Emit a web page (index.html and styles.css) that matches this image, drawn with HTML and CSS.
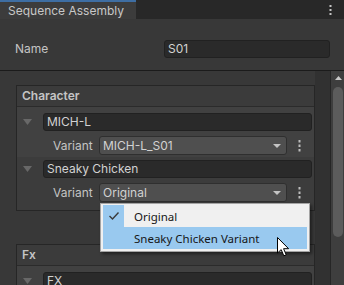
FILE: index.html
```html
<!DOCTYPE html>
<html>
<head>
<meta charset="utf-8">
<link rel="stylesheet" href="styles.css">
</head>
<body>
<div class="window">
  <div class="tabbar">
    <div class="tab">Sequence Assembly</div>
    <div class="tabbar-spacer"></div>
    <svg class="kebab tab-kebab" width="3" height="10" viewBox="0 0 3 10"><rect x="0.5" y="0" width="2" height="2" fill="#c4c4c4"/><rect x="0.5" y="4" width="2" height="2" fill="#c4c4c4"/><rect x="0.5" y="8" width="2" height="2" fill="#c4c4c4"/></svg>
  </div>
  <div class="namebar">
    <span class="label">Name</span>
    <div class="field name-field">S01</div>
  </div>
  <div class="scrollview">
    <div class="content">
      <div class="inner">
        <section class="box">
          <div class="box-header">Character</div>
          <div class="box-body">
            <div class="item">
              <div class="line">
                <svg class="fold" width="9" height="6" viewBox="0 0 9 6"><polygon points="0,0 9,0 4.5,6" fill="#686868"/></svg>
                <div class="field item-field">MICH-L</div>
              </div>
              <div class="line variant-line">
                <span class="variant-label">Variant</span>
                <div class="dropdown"><span>MICH-L_S01</span><svg width="8" height="4" viewBox="0 0 8 4"><polygon points="0,0 8,0 4,4" fill="#c4c4c4"/></svg></div>
                <div class="kebab-wrap"><svg width="3" height="12" viewBox="0 0 3 12"><rect x="0.5" y="0" width="2" height="2.5" fill="#bdbdbd"/><rect x="0.5" y="4.5" width="2" height="2.5" fill="#bdbdbd"/><rect x="0.5" y="9" width="2" height="2.5" fill="#bdbdbd"/></svg></div>
              </div>
            </div>
            <div class="item item-alt">
              <div class="line">
                <svg class="fold" width="9" height="6" viewBox="0 0 9 6"><polygon points="0,0 9,0 4.5,6" fill="#686868"/></svg>
                <div class="field item-field">Sneaky Chicken</div>
              </div>
              <div class="line variant-line">
                <span class="variant-label">Variant</span>
                <div class="dropdown"><span>Original</span><svg width="8" height="4" viewBox="0 0 8 4"><polygon points="0,0 8,0 4,4" fill="#c4c4c4"/></svg></div>
                <div class="kebab-wrap"><svg width="3" height="12" viewBox="0 0 3 12"><rect x="0.5" y="0" width="2" height="2.5" fill="#bdbdbd"/><rect x="0.5" y="4.5" width="2" height="2.5" fill="#bdbdbd"/><rect x="0.5" y="9" width="2" height="2.5" fill="#bdbdbd"/></svg></div>
              </div>
            </div>
          </div>
        </section>
        <section class="box fx-box">
          <div class="box-header">Fx</div>
          <div class="box-body">
            <div class="item">
              <div class="line">
                <svg class="fold" width="9" height="6" viewBox="0 0 9 6"><polygon points="0,0 9,0 4.5,6" fill="#686868"/></svg>
                <div class="field item-field">FX</div>
              </div>
            </div>
          </div>
        </section>
      </div>
      <div class="gutter"></div>
    </div>
    <div class="scrollbar">
      <svg class="sb-arrow" width="7" height="4" viewBox="0 0 7 4"><polygon points="3.5,0 7,4 0,4" fill="#c8c8c8"/></svg>
      <div class="thumb"></div>
    </div>
  </div>

  <div class="popup">
    <div class="menu-item checked">
      <div class="check-col"><svg width="12" height="10" viewBox="0 0 12 10"><polyline points="1.5,5 4.5,8 10.5,1.5" fill="none" stroke="#3a3a3a" stroke-width="1.4"/></svg></div>
      <span class="menu-text">Original</span>
    </div>
    <div class="menu-item hover">
      <div class="check-col"></div>
      <span class="menu-text">Sneaky Chicken Variant</span>
    </div>
  </div>
  <svg class="cursor" width="14" height="21" viewBox="0 0 14 21"><path d="M0.5,0.5 L0.5,16 L4.2,12.6 L6.8,18.8 L9.2,17.8 L6.6,11.7 L11.6,11.7 Z" fill="#ffffff" stroke="#000000" stroke-width="1" stroke-linejoin="miter"/></svg>
</div>
</body>
</html>
```

FILE: styles.css
```css
* { box-sizing: border-box; }
html, body { margin: 0; padding: 0; }
body {
  width: 344px;
  height: 285px;
  overflow: hidden;
  background: #383838;
  font-family: Inter, "Noto Sans", sans-serif;
  font-size: 12px;
  color: #c4c4c4;
}
.window {
  position: relative;
  width: 344px;
  height: 285px;
  display: flex;
  flex-direction: column;
}
.tabbar {
  height: 19px;
  background: #282828;
  display: flex;
  align-items: stretch;
  flex: none;
}
.tab {
  width: 136px;
  background: #3c3c3c;
  border-top: 2px solid #3e6ea3;
  padding-left: 8px;
  line-height: 17px;
  font-size: 12px;
  color: #c8c8c8;
  white-space: nowrap;
}
.tabbar-spacer { flex: 1; }
.tab-kebab { margin: 5px 12px 0 0; }

.namebar {
  height: 52px;
  flex: none;
  display: flex;
  align-items: flex-start;
  padding: 21px 14px 0 15px;
  border-bottom: 1px solid #1b1b1b;
}
.namebar .label {
  width: 149px;
  line-height: 18px;
  color: #c4c4c4;
}
.field {
  height: 18px;
  background: #2a2a2a;
  border: 1px solid #212121;
  border-radius: 3px;
  color: #d2d2d2;
  line-height: 16px;
  padding-left: 3px;
  white-space: nowrap;
  overflow: hidden;
}
.name-field { width: 166px; }

.scrollview {
  flex: 1;
  display: flex;
  min-height: 0;
}
.content {
  width: 331px;
  display: flex;
  border-right: 1px solid #262626;
}
.inner {
  width: 315px;
  padding: 14px 0 0 16px;
}
.gutter {
  flex: 1;
  background: #313131;
}
.scrollbar {
  flex: 1;
  background: #3e3e3e;
  display: flex;
  flex-direction: column;
  align-items: center;
  padding-top: 5px;
}
.sb-arrow { margin-left: 1px; }
.thumb {
  margin-top: 7px;
  margin-left: 1px;
  width: 10px;
  height: 150px;
  background: #5c5c5c;
  border-radius: 5px;
}

.box {
  border: 1px solid #262626;
  background: #414141;
}
.fx-box { margin-top: 33px; }
.box-header {
  height: 21px;
  background: #3b3b3b;
  border-bottom: 1px solid #2b2b2b;
  padding-left: 5px;
  line-height: 20px;
  font-weight: 600;
  color: #c4c4c4;
}
.item {
  padding: 6px 2px 2px 0;
  display: flex;
  flex-direction: column;
  gap: 5px;
}
.item-alt {
  background: #3c3c3c;
  padding-top: 3px;
  padding-bottom: 8px;
}
.line {
  display: flex;
  align-items: center;
}
.fold { margin: 0 0 0 6px; flex: none; }
.item-field {
  margin-left: 11px;
  flex: 1;
}
.variant-line { padding-left: 36px; }
.variant-label { width: 46px; color: #c4c4c4; }
.dropdown {
  width: 188px;
  height: 19px;
  background: #4f4f4f;
  border: 1px solid #2f2f2f;
  border-radius: 3px;
  display: flex;
  align-items: center;
  justify-content: space-between;
  padding: 0 5px 0 3px;
  color: #d2d2d2;
}
.kebab-wrap {
  flex: 1;
  display: flex;
  justify-content: center;
  padding-right: 0;
}

.popup {
  position: absolute;
  left: 100px;
  top: 203px;
  width: 210px;
  height: 49px;
  background: #f0f0f0;
  border: 1px solid #a4a4a4;
  padding: 1px 2px;
  box-shadow: 2px 2px 3px rgba(0,0,0,0.45);
  font-family: "Noto Sans", "Open Sans", sans-serif;
  font-size: 11.5px;
  color: #161616;
}
.menu-item {
  height: 22px;
  display: flex;
  align-items: center;
}
.check-col {
  width: 21px;
  height: 100%;
  display: flex;
  align-items: center;
  justify-content: center;
}
.checked .check-col { background: #99c9ef; }
.hover { background: #99c9ef; }
.menu-text { margin-left: 10px; }

.cursor {
  position: absolute;
  left: 277px;
  top: 237px;
}
```
